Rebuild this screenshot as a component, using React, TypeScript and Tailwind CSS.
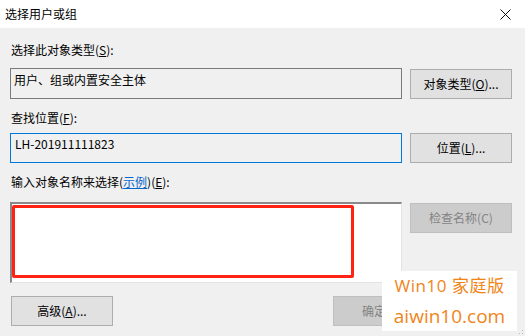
import React from 'react';

const font = { fontFamily: '"Noto Sans CJK SC", "Noto Sans", sans-serif' };

const Btn: React.FC<{ children: React.ReactNode; disabled?: boolean; className?: string }> = ({ children, disabled, className = '' }) => (
  <div
    className={`flex shrink-0 items-center justify-center h-[30px] w-[102px] text-[12px] border ${
      disabled ? 'bg-[#cccccc] border-[#bfbfbf] text-[#838383]' : 'bg-[#e1e1e1] border-[#adadad] text-black'
    } ${className}`}
  >
    {children}
  </div>
);

const App: React.FC = () => {
  return (
    <div className="relative w-[525px] h-[336px] overflow-hidden bg-[#f0f0f0] text-black" style={font}>
      {/* title bar */}
      <div className="flex items-center justify-between h-[28px] bg-white pl-[5px] pr-[14px]">
        <span className="text-[12px] leading-none">选择用户或组</span>
        <svg width="11" height="11" viewBox="0 0 11 11">
          <path d="M0.5 0.5 L10.5 10.5 M10.5 0.5 L0.5 10.5" stroke="#111" strokeWidth="1" />
        </svg>
      </div>

      <div className="pl-[10px] pr-[13px]">
        <div className="h-[16px] mt-[14px] pl-[1px] text-[12px] leading-[16px]">
          选择此对象类型(<u>S</u>):
        </div>
        <div className="flex gap-[8px] mt-[10px] items-start">
          <div className="w-[392px] h-[31px] border border-[#7a7a7a] bg-[#f0f0f0] pl-[3px] pt-[3px] text-[12px] leading-[16px]">
            用户、组或内置安全主体
          </div>
          <Btn className="mt-[1px] h-[29px]">
            对象类型(<u>O</u>)...
          </Btn>
        </div>

        <div className="h-[16px] mt-[11px] pl-[1px] text-[12px] leading-[16px]">
          查找位置(<u>F</u>):
        </div>
        <div className="flex gap-[8px] mt-[7px] items-start">
          <div className="w-[392px] h-[30px] border border-[#0078d7] bg-[#f0f0f0] pl-[4px] pt-[2px] text-[12px] leading-[16px]">
            LH-201911111823
          </div>
          <Btn className="h-[29px]">
            位置(<u>L</u>)...
          </Btn>
        </div>

        <div className="h-[16px] mt-[11px] pl-[1px] text-[12px] leading-[16px]">
          输入对象名称来选择(<span className="text-[#0066cc] underline">示例</span>)(<u>E</u>):
        </div>
        <div className="flex gap-[8px] mt-[12px] items-start">
          <div className="w-[392px] h-[81px] border-t-2 border-l-2 border-t-[#8a8a8a] border-l-[#8a8a8a] border-r border-b border-r-[#e3e3e3] border-b-[#e3e3e3] bg-white pt-[1px]">
            <div className="w-[342px] h-[73px] border-[3px] border-[#ff2314] rounded-[2px]" />
          </div>
          <Btn disabled className="mt-[1px] h-[30px]">
            检查名称(C)
          </Btn>
        </div>

        <div className="flex mt-[13px] pl-[1px]">
          <Btn>
            高级(<u>A</u>)...
          </Btn>
          <Btn disabled className="ml-[220px] justify-start pl-[28px]">
            确定
          </Btn>
        </div>
      </div>

      {/* watermark */}
      <div className="absolute left-[382px] top-[271px] w-[135px] h-[60px] bg-white flex flex-col items-center justify-center text-[#f08519]">
        <div className="text-[17px] leading-[20px] tracking-[0.5px]" style={{ fontFamily: '"Open Sans", "Noto Sans CJK SC", sans-serif' }}>
          Win10 家庭版
        </div>
        <div className="text-[19px] leading-[22px] mt-[9px]" style={{ fontFamily: '"Open Sans", sans-serif' }}>
          aiwin10.com
        </div>
      </div>

      {/* resize grip */}
      <svg className="absolute right-[1px] bottom-0" width="8" height="6" viewBox="0 0 8 6">
        <rect x="6" y="0" width="1" height="1" fill="#b8b8b8" />
        <rect x="3" y="3" width="1" height="1" fill="#b8b8b8" />
        <rect x="6" y="3" width="1" height="1" fill="#b8b8b8" />
      </svg>
    </div>
  );
};

export default App;
